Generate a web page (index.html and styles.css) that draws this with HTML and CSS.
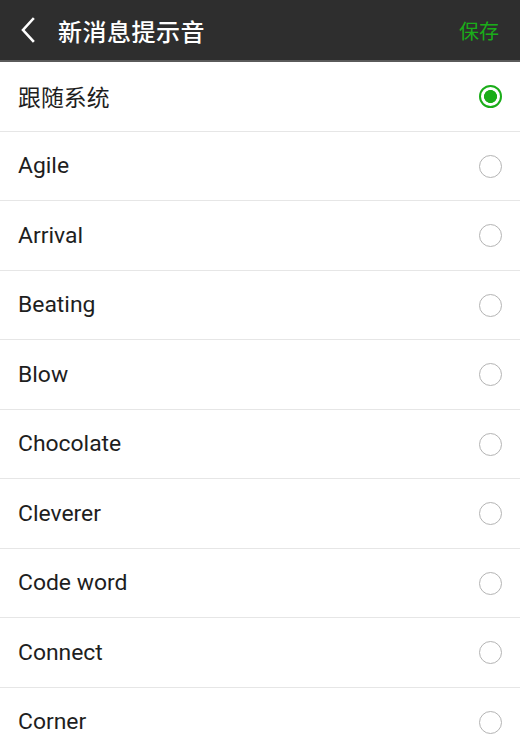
FILE: index.html
```html
<!DOCTYPE html>
<html lang="zh">
<head>
<meta charset="utf-8">
<link rel="stylesheet" href="styles.css">
</head>
<body>
<div class="header">
  <svg class="back" width="20" height="28" viewBox="0 0 20 28"><path d="M15 3 L5 14 L15 25" fill="none" stroke="#fff" stroke-width="2.6" stroke-linecap="square"/></svg>
  <div class="title">新消息提示音</div>
  <div class="save">保存</div>
</div>
<div class="list">
  <div class="row"><span class="label">跟随系统</span><span class="radio on"></span></div>
  <div class="row"><span class="label">Agile</span><span class="radio"></span></div>
  <div class="row"><span class="label">Arrival</span><span class="radio"></span></div>
  <div class="row"><span class="label">Beating</span><span class="radio"></span></div>
  <div class="row"><span class="label">Blow</span><span class="radio"></span></div>
  <div class="row"><span class="label">Chocolate</span><span class="radio"></span></div>
  <div class="row"><span class="label">Cleverer</span><span class="radio"></span></div>
  <div class="row"><span class="label">Code word</span><span class="radio"></span></div>
  <div class="row"><span class="label">Connect</span><span class="radio"></span></div>
  <div class="row"><span class="label">Corner</span><span class="radio"></span></div>
</div>
</body>
</html>
```
FILE: styles.css
```css
html, body { margin: 0; padding: 0; }
body {
  width: 520px;
  height: 741px;
  overflow: hidden;
  background: #fff;
  font-family: Roboto, "Noto Sans CJK SC", sans-serif;
}
.header {
  height: 60px;
  background: #2e2e2e;
  border-bottom: 2px solid #5a5a5a;
  display: flex;
  align-items: center;
  padding: 0 21px 0 18px;
}
.back { flex: none; margin-right: 20px; }
.title {
  flex: 1;
  color: #fff;
  font-size: 24px;
  font-weight: 500;
  letter-spacing: 0.5px;
}
.save {
  color: #1aad19;
  font-size: 20px;
}
.list { display: flex; flex-direction: column; }
.row {
  box-sizing: border-box;
  height: 69.5px;
  border-bottom: 1px solid #e6e6e6;
  display: flex;
  align-items: center;
  justify-content: space-between;
  padding: 0 18px 0 18px;
}
.label {
  font-size: 22.9px;
  color: #1e1e1e;
}
.radio {
  box-sizing: border-box;
  width: 23px;
  height: 23px;
  border-radius: 50%;
  border: 1.8px solid #b4b4b4;
  margin-top: 1px;
}
.radio.on {
  border: 2.2px solid #1aad19;
  background: radial-gradient(circle, #1aad19 0 6.2px, #fff 6.8px);
}
```
